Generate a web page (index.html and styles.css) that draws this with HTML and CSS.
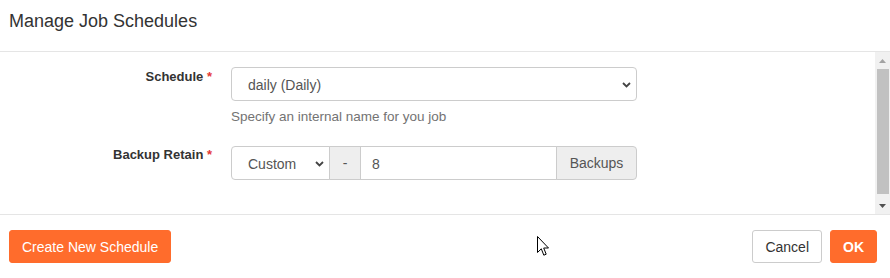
FILE: index.html
```html
<!DOCTYPE html>
<html lang="en">
<head>
<meta charset="utf-8">
<title>Manage Job Schedules</title>
<link rel="stylesheet" href="styles.css">
</head>
<body>
<div class="modal">
  <header class="modal-header">
    <h4 class="modal-title">Manage Job Schedules</h4>
  </header>
  <div class="modal-body">
    <div class="body-content">
      <div class="form-row">
        <label class="form-label">Schedule <span class="req">*</span></label>
        <div class="form-field">
          <div class="select-wrap">
            <select class="control select"><option>daily (Daily)</option></select>
            <svg class="chev" width="9" height="6" viewBox="0 0 9 6"><path d="M1 1 L4.5 4.5 L8 1" fill="none" stroke="#444" stroke-width="1.8"/></svg>
          </div>
          <p class="help">Specify an internal name for you job</p>
        </div>
      </div>
      <div class="form-row second">
        <label class="form-label">Backup Retain <span class="req">*</span></label>
        <div class="form-field">
          <div class="input-group">
            <div class="select-wrap custom">
              <select class="control select"><option>Custom</option></select>
              <svg class="chev" width="9" height="6" viewBox="0 0 9 6"><path d="M1 1 L4.5 4.5 L8 1" fill="none" stroke="#444" stroke-width="1.8"/></svg>
            </div>
            <span class="addon dash">-</span>
            <input class="control num" type="text" value="8">
            <span class="addon backups">Backups</span>
          </div>
        </div>
      </div>
    </div>
    <div class="scrollbar">
      <div class="sb-btn"><svg width="7" height="4" viewBox="0 0 7 4"><path d="M0 4 L3.5 0 L7 4 Z" fill="#a3a3a3"/></svg></div>
      <div class="sb-track"><div class="sb-thumb"></div></div>
      <div class="sb-btn"><svg width="7" height="4" viewBox="0 0 7 4"><path d="M0 0 L3.5 4 L7 0 Z" fill="#505050"/></svg></div>
    </div>
  </div>
  <footer class="modal-footer">
    <button class="btn btn-primary">Create New Schedule</button>
    <div class="footer-right">
      <button class="btn btn-default">Cancel</button>
      <button class="btn btn-primary btn-bold">OK</button>
    </div>
  </footer>
  <svg class="cursor" width="13" height="21" viewBox="0 0 13 21"><path d="M0.5 0.5 L0.5 16.5 L4.3 12.8 L6.8 19.2 L9.2 18.2 L6.7 12 L11.5 12 Z" fill="#fff" stroke="#000" stroke-width="1" stroke-linejoin="miter"/></svg>
</div>
</body>
</html>
```

FILE: styles.css
```css
* { box-sizing: border-box; }
html, body { margin: 0; padding: 0; background: #fff; }
body {
  font-family: "Liberation Sans", Arial, sans-serif;
  color: #333;
  width: 890px;
  height: 278px;
  overflow: hidden;
}
.modal { position: relative; width: 890px; height: 278px; }
.modal-header {
  height: 52px;
  border-bottom: 1px solid #e5e5e5;
  padding: 11px 9px 0;
}
.modal-title {
  margin: 0;
  font-size: 18px;
  line-height: 20px;
  font-weight: normal;
  color: #333;
}
.modal-body {
  display: flex;
  height: 163px;
  border-bottom: 1px solid #e5e5e5;
}
.body-content {
  flex: 1;
  padding-top: 15px;
}
.form-row {
  display: grid;
  grid-template-columns: 216px 406px;
  column-gap: 15px;
}
.form-row.second { margin-top: 20px; }
.form-label {
  text-align: right;
  padding-right: 4px;
  padding-top: 1px;
  font-size: 13px;
  line-height: 18px;
  font-weight: bold;
  color: #333;
}
.second .form-label { padding-top: 0; }
.req { color: #e53935; font-weight: bold; }
.select-wrap { position: relative; }
.control {
  font-family: "Liberation Sans", Arial, sans-serif;
  font-size: 14px;
  color: #555;
  background: #fff;
  border: 1px solid #ccc;
  height: 34px;
  outline: none;
}
.select {
  -webkit-appearance: none;
  appearance: none;
  width: 100%;
  padding: 1px 24px 0 16px;
  border-radius: 4px;
}
.chev {
  position: absolute;
  right: 6px;
  top: 15px;
  pointer-events: none;
}
.help {
  margin: 7px 0 0;
  font-size: 13.5px;
  line-height: 18px;
  color: #737373;
}
.input-group { display: flex; height: 34px; }
.input-group .custom { width: 99px; flex: none; }
.input-group .custom .select { border-radius: 4px 0 0 4px; }
.addon {
  display: flex;
  align-items: center;
  justify-content: center;
  background: #eee;
  border: 1px solid #ccc;
  margin-left: -1px;
  font-size: 14px;
  color: #555;
  height: 34px;
}
.dash { width: 32px; }
.num {
  width: 197px;
  margin-left: -1px;
  padding: 1px 11px 0;
}
.backups {
  width: 81px;
  border-radius: 0 4px 4px 0;
}
.scrollbar {
  width: 15px;
  background: #f1f1f1;
  display: flex;
  flex-direction: column;
}
.sb-btn {
  height: 17px;
  display: flex;
  align-items: center;
  justify-content: center;
}
.sb-track { flex: 1; padding: 0 1px 0 2px; }
.sb-thumb { height: 125px; background: #c1c1c1; }
.modal-footer {
  display: flex;
  justify-content: space-between;
  align-items: flex-start;
  padding: 15px 13px 0 9px;
}
.footer-right { display: flex; gap: 8px; }
.btn {
  font-family: "Liberation Sans", Arial, sans-serif;
  font-size: 14px;
  height: 33px;
  padding: 0 12px;
  border-radius: 3px;
  border: 1px solid transparent;
  cursor: pointer;
}
.btn-primary { background: #ff6c2c; color: #fff; border-color: #ff6c2c; }
.btn-bold { font-weight: bold; }
.btn-default { background: #fff; color: #333; border-color: #ccc; }
.cursor { position: absolute; left: 537px; top: 236px; }
```
